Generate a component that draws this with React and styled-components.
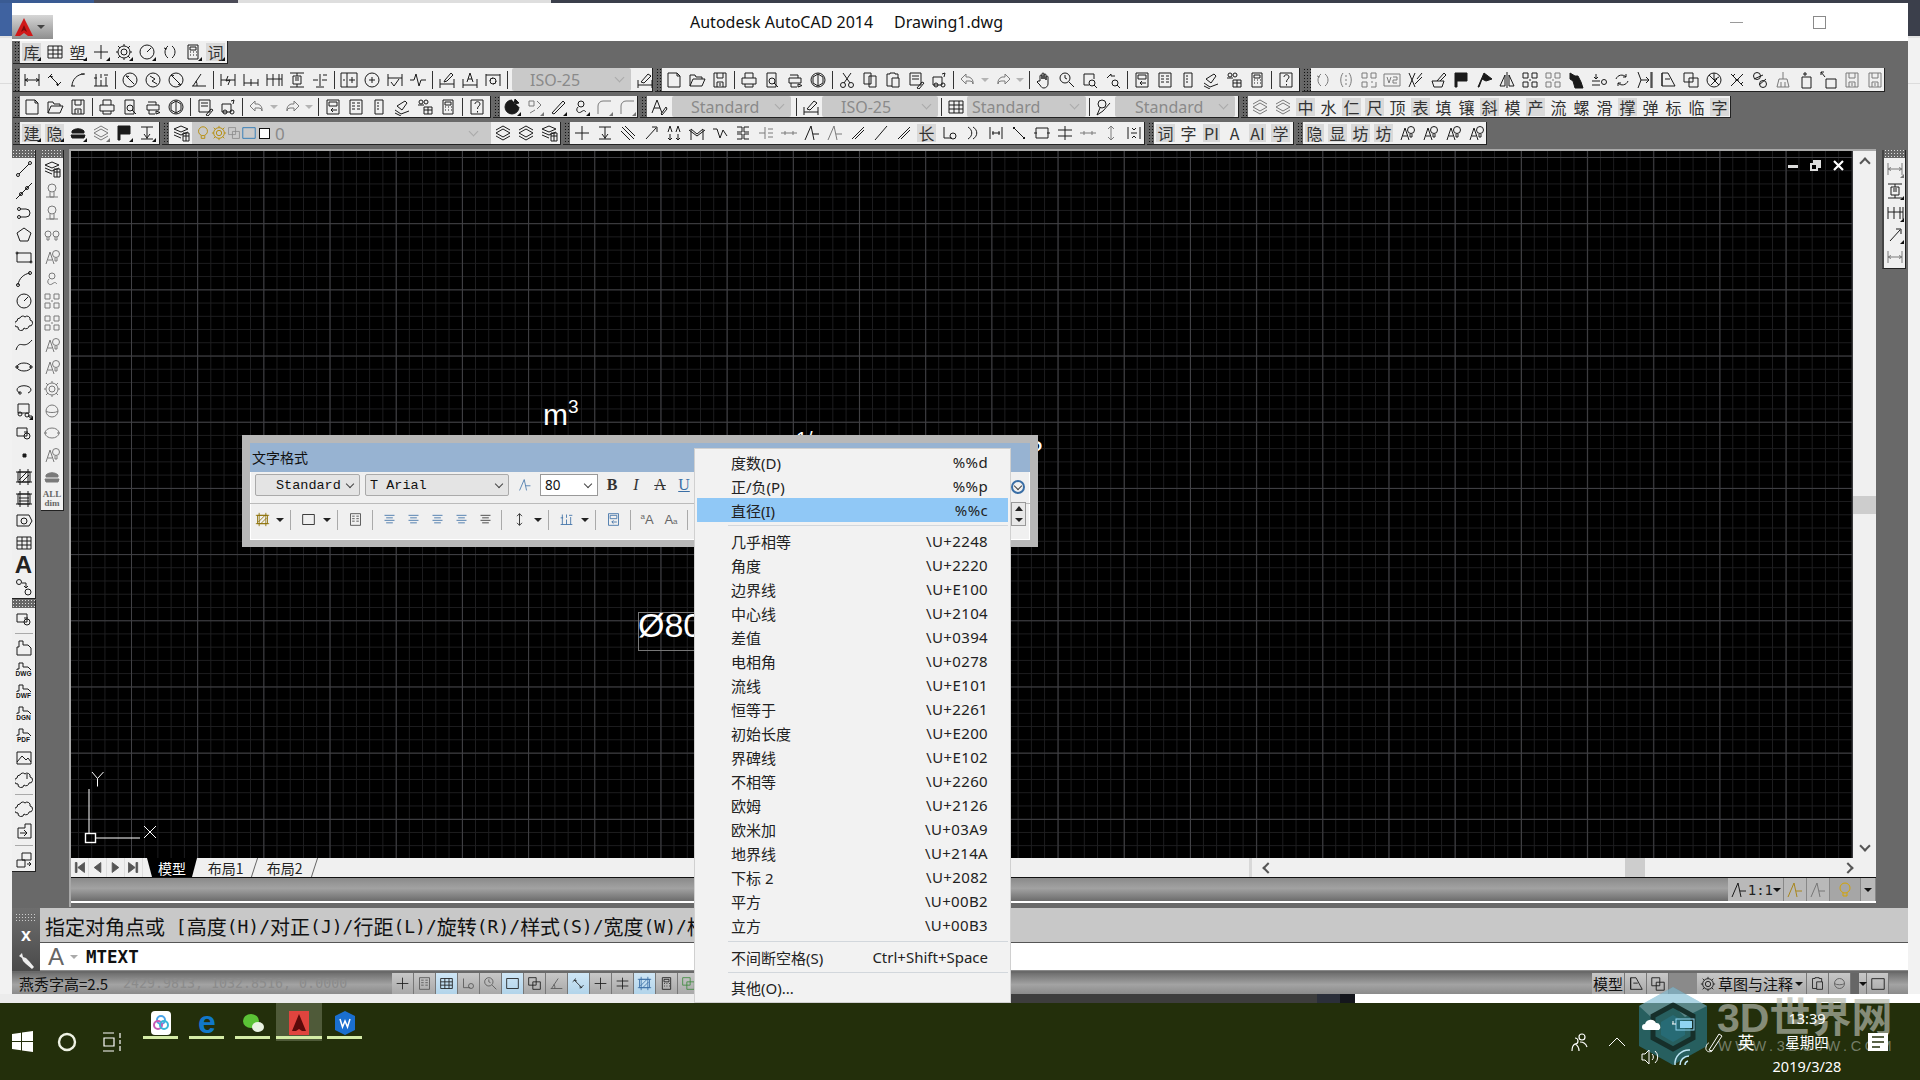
import React from 'react';
import styled, { createGlobalStyle } from 'styled-components';

const CJK = '"Noto Sans CJK SC", "Noto Sans", sans-serif';
const UI = '"Noto Sans", "Noto Sans CJK SC", sans-serif';
const MONO = '"DejaVu Sans Mono", "Noto Sans CJK SC", monospace';

const GlobalStyle = createGlobalStyle`
  html, body { margin: 0; padding: 0; background: #eee; }
  * { box-sizing: border-box; }
`;

// svg path helpers
const c = (x, y, r) => `M${x - r} ${y}a${r} ${r} 0 1 0 ${2 * r} 0a${r} ${r} 0 1 0 ${-2 * r} 0`;
const r = (x, y, w, h) => `M${x} ${y}h${w}v${h}h${-w}z`;

const ICONS = {
  dlin: 'M2 3v12M16 3v12M2 9h14M2 9l3-1.5M2 9l3 1.5M16 9l-3-1.5M16 9l-3 1.5',
  dali: 'M2 7l4-4M11 15l4-4M4 5l9 9M4 5l3 1M13 14l-3-1',
  darc: 'M3 15C3 9 8 3 15 3M2 15h4M12 3h4',
  dord: 'M4 3v12M9 3v4M9 9v6M14 6v9M2 15h14M2 7h3M12 4h4',
  drad: c(9, 9, 7) + 'M5 5l8 8M5 5l3 .5',
  djog: c(9, 9, 7) + 'M6 5l5 3-3 2 5 3',
  ddia: c(9, 9, 7) + 'M4 4l10 10M4 4l3 .5M14 14l-3-.5',
  dang: 'M2 15h14M3 15L11 3M7 15a8 8 0 0 0-1-5',
  dqck: 'M2 3v12M16 3v12M2 9h14M9 5l-2 5 4-1-2 5',
  dbase: 'M2 3v12M9 8v7M16 8v7M2 12h14',
  dcont: 'M2 3v12M8 3v12M14 3v12M17 3v12M2 8h15',
  dspace: 'M2 2h14M2 16h14M5 5h8v8H5zM7 7h4M7 9h4M9 2v3M9 13v3',
  dbrk: 'M9 3v12M2 9h5M11 9h5M5 16h8M12 4h4',
  dtol: r(1, 2, 16, 14) + 'M7 2v14M3 9h2M12 6v6M9 9h6',
  dcen: c(9, 9, 7) + 'M9 6v6M6 9h6',
  dinsp: 'M2 3v12M16 3v12M2 7h14M5 11l3 4 5-7',
  djogl: 'M1 9h4l2-6 3 12 2-6h5',
  dedit: 'M2 8v9M16 8v9M2 13h14M7 9l6-7 2 2-6 6-3 1z',
  dtedit: 'M2 8v9M16 8v9M2 14h14M6 11L9 2l3 9M7 8h4',
  dupd: 'M2 3v12M16 3v12M2 4h14M6 10a3 3 0 1 1 3 3M12 10a3 3 0 1 1-3-3',
  dstyle: 'M2 9v8M16 9v8M2 14h14M5 11l7-8 3 2-7 7z',
  new: 'M3 2h9l3 3v11H3zM12 2v3h3',
  open: 'M2 15V4h5l1 2h6v2M2 15l3-7h12l-3 7z',
  save: 'M3 2h12v14H3zM6 2v5h6V2M6 16v-5h6v5M9 12v3',
  print: 'M5 7V2h8v5M2 7h14v6H2zM5 13v3h8v-3',
  prev: 'M4 2h9v14H4z' + c(9, 10, 3) + 'M11 12l4 4',
  plot: 'M4 4h8v3M3 7h12v5H3zM5 12v4h6M12 13l4 1.5-4 1.5z',
  pub3d: c(9, 9, 7) + 'M4 6l5-3 5 3v6l-5 3-5-3zM9 3v12',
  cut: c(5, 14, 2.5) + c(13, 14, 2.5) + 'M6 12L13 2M12 12L5 2',
  copy: 'M3 2h7v11H3zM8 5h7v11H8z',
  paste: 'M3 3h3V2h5v1h3v4M3 3v12h5M8 7h7v9H8z',
  match: r(3, 2, 11, 12) + 'M5 5h7M5 8h7M10 17l5-6 2 1-5 6z',
  block: r(3, 6, 9, 8) + c(6, 14, 2) + c(13, 14, 2) + 'M12 3l3-1-1 4',
  undo: 'M7 3L2 8l5 5v-3h4a3 3 0 0 1 3 3 6 6 0 0 0-4-7H7z',
  redo: 'M11 3l5 5-5 5v-3H7a3 3 0 0 0-3 3 6 6 0 0 1 4-7h3z',
  pan: 'M5 10V5a1 1 0 0 1 2 0v3V3a1 1 0 0 1 2 0v5V4a1 1 0 0 1 2 0v5V6a1 1 0 0 1 2 0v7c0 2-2 4-4 4s-3-1-4-3l-3-3 1-1z',
  zoomrt: c(7, 7, 5) + 'M7 4v3l2 1M11 11l5 5',
  zoomw: 'M3 3h10v5M3 3v11h5' + c(11, 12, 3) + 'M13 14l3 3',
  zoomp: 'M3 7l4-4v2h4' + c(11, 12, 3) + 'M13 14l3 3',
  props: r(3, 2, 12, 14) + r(5, 4, 8, 4) + 'M13 12H7l2-2M7 12l2 2',
  dc: r(3, 2, 12, 14) + 'M5 5h3M10 5h3M5 8h3M10 8h3M5 11h3M10 11h3',
  palette: r(5, 2, 8, 14) + 'M7 5h2M7 8h2M7 11h2',
  sheet: 'M4 8l8-5 2 2-5 7zM2 12l6 4 8-3M2 15l6 3',
  mkup: c(5, 4, 2) + c(10, 4, 2) + r(8, 9, 8, 7) + 'M8 12h8M12 9v7M2 7h6',
  calc: r(4, 2, 10, 14) + r(6, 4, 6, 3) + 'M6 9h1M9 9h1M12 9h1M6 12h1M9 12h1M12 12h1',
  help: r(3, 2, 12, 14) + 'M7 6c0-3 5-3 5 0 0 2-2.5 2-2.5 5M9.5 13v1.5',
  curveA: 'M7 3C3 6 3 12 7 15M11 3c4 3 4 9 0 12M3 5l3 1',
  curveB: 'M6 2c-3 4-3 10 0 14M12 2c3 4 3 10 0 14M8 5h2M8 9h2M8 13h2',
  blk: r(2, 2, 5, 5) + r(11, 2, 5, 5) + r(2, 11, 5, 5) + 'M11 11h2M16 11v5h-5',
  v2: r(1, 3, 16, 12) + 'M4 6l2 6 2-6M10 6h4v3h-4v3h4',
  pens: 'M3 2l6 14M9 2L3 16M11 8l5-6M9 13l7-7',
  brush: 'M3 10h12l-2 6H5zM8 10l7-8 2 2-6 6',
  flag: 'M3 2h2v14H3zM5 2h10v8H5z',
  flagB: 'M3 16L9 2l8 6-6 2-4-2-3 8z',
  mirror: 'M9 1v16M7 4v11H2zM11 4v11h5z',
  grp: r(2, 2, 5, 5) + r(11, 2, 5, 5) + r(2, 11, 5, 5) + r(11, 11, 5, 5) + 'M8 9h2',
  cat: 'M3 2l5 3 3 0 3 6 2 6H8L6 10 3 8z',
  zero: 'M2 10h8M6 3v5M4 6l2 2 2-2M2 14h8' + c(14, 11, 2.5),
  swap: 'M3 8a6 6 0 0 1 10-2M15 10a6 6 0 0 1-10 2M13 3v3h-3M5 15v-3h3',
  arrowbar: 'M2 1l3 8-3 8M5 9h8M10 6l3 3-3 3M15 1v16M16 1v16',
  doc3d: 'M3 2h6l7 13H3zM3 2v13M6 8h5',
  doc2: r(2, 2, 9, 9) + r(7, 7, 9, 9),
  wheel: c(9, 9, 7) + 'M4 4l10 10M9 2v7l5-3M6 14l6-6',
  crossArr: 'M3 3l12 12M15 3L3 15M5 5l2-2M13 13l2-2M7 9h4',
  link: c(6, 5, 3.5) + c(12, 13, 3.5) + 'M3 8l9-4M8 14l7-6',
  broom: 'M9 1v7M5 8h8l2 8H3zM7 11v5M11 11v5',
  newf: 'M5 6h9v11H5zM8 1v4M6 3h4',
  boxarrow: r(6, 8, 10, 9) + 'M1 1l4 5M1 4V1h3',
  orbit: 'M9 2a7 7 0 1 0 7 7M12 1l4 4-5 1z',
  shape: 'M3 3h5v5H3zM11 3l4 4-4 4M4 15l5-3',
  pen: 'M3 15L14 3l2 2L5 16z',
  knot: c(9, 6, 3) + 'M6 9c-3 3 0 7 3 5s3-2 5 0',
  fillet: 'M3 16V8a5 5 0 0 1 5-5h8',
  table: r(2, 3, 14, 12) + 'M2 7h14M2 11h14M7 3v12M12 3v12',
  textA: 'M2 15L7 2l5 13M4 10h6M11 16l5-7 1 2-5 6z',
  mlead: c(7, 6, 4) + 'M5 10l-3 7 6-4 7-8',
  layers: 'M2 9l7-4 7 4-7 4zM2 12l7 4 7-4M2 6l7-4 7 4',
  layerp: 'M2 5l7-3 7 3-7 3zM2 8l7 3 7-3M2 11l7 3M11 9h6v8h-6zM11 12h6M14 9v8',
  cross: 'M9 2v14M2 9h14',
  dim: 'M3 3h12M3 15h12M9 3v12M6 10l3 4 3-4',
  diag: 'M3 3l12 12M6 2l10 10M2 7l9 9',
  leader: 'M4 15L14 4M10 3h5v5',
  aa: 'M3 8l2-6 2 6M11 8l2-6 2 6M5 10v6M13 10v6M3 14l2 2 2-2M11 14l2 2 2-2',
  mm: 'M3 16V5l6 5 6-5v11M1 6l8 6 8-6',
  zig: 'M2 5h4l3 9 3-8 4 6',
  brkt: 'M3 3h5v5H3M15 3h-5v5h5M3 15h5v-5H3M15 15h-5v-5h5',
  dash: 'M2 9h6M11 5h5M11 9h5M11 13h5M8 3v12',
  vv: 'M2 16L8 2l3 14M10 10h6',
  diagL: 'M3 15L15 3M6 15L15 6',
  slash: 'M3 16L15 2',
  circL: 'M3 3v11h8' + c(12, 12, 3),
  arcs: 'M4 3c5 3 5 9 0 12M9 3c5 3 5 9 0 12',
  ibar: 'M3 3v12M15 3v12M5 9h8M6 7v4M12 7v4',
  ln: 'M3 3l12 12M5 3l-2 2M15 13l-2 2',
  rectC: r(3, 4, 12, 10) + 'M1 9h3M14 9h3',
  tt: 'M2 6h14M2 12h14M9 2v14',
  lines: 'M3 4h12M5 7h8M3 10h12M5 13h8',
  minusA: 'M1 9h16M5 7v4M13 7v4',
  updown: 'M9 2v14M6 5l3-3 3 3M6 13l3 3 3-3',
  lbar: 'M3 3v12M15 3v12M6 9h6M7 4l2 2 2-2M7 14l2-2 2 2',
  gear: c(9, 9, 3) + c(9, 9, 6) + 'M9 1v2M9 15v2M1 9h2M15 9h2M3 3l2 2M13 13l2 2M3 15l2-2M13 5l2-2',
  bulb: c(9, 7, 5) + 'M7 12v3h4v-3',
  bulbA: 'M3 16L7 4l4 12M5 12h4' + c(13, 6, 3.5) + 'M12 10v3h2v-3',
  line: 'M4 14L14 4' + c(3, 15, 1.5) + c(15, 3, 1.5),
  xline: 'M1 17L17 1' + c(6, 12, 1.5) + c(12, 6, 1.5),
  pline: 'M5 5h6a4 4 0 0 1 0 8H5' + c(4, 5, 1.5) + c(4, 13, 1.5),
  polygon: 'M9 2l7 5-3 8H5L2 7z',
  rect: r(2, 5, 14, 9) + c(2, 5, 1) + c(16, 14, 1),
  arc: 'M3 15C4 8 9 4 15 3' + c(3, 15, 1.5) + c(15, 3, 1.5),
  circle: c(9, 9, 7) + 'M9 9l4-4',
  cloud: 'M5 4a3 3 0 0 1 5-1 3 3 0 0 1 5 3 3 3 0 0 1-1 6 3 3 0 0 1-5 2 3 3 0 0 1-6-1 3 3 0 0 1-1-6 3 3 0 0 1 3-3z',
  spline: 'M1 14C5 2 8 15 17 4',
  ellipse: 'M2 9a7 4 0 1 0 14 0a7 4 0 1 0-14 0' + c(2, 9, 1.2) + c(16, 9, 1.2),
  earc: 'M5 13a7 4 0 1 1 8 0' + c(5, 13, 1.2),
  insert: r(3, 2, 11, 9) + c(5, 12, 2) + c(12, 13, 2) + 'M13 14l4 3v-3z',
  makeb: r(2, 4, 10, 8) + c(12, 12, 3) + 'M9 8h4',
  point: r(8, 8, 3, 3),
  hatch: r(3, 4, 12, 10) + 'M1 4h16M1 14h16M5 1v16M13 1v16M4 12l8-8M7 14l7-7',
  grad: r(3, 4, 12, 10) + 'M1 4h16M1 14h16M5 1v16M13 1v16M4 8h10M4 11h10',
  region: 'M2 3h12l3 6-3 5H2z' + c(9, 9, 3),
  addsel: c(4, 4, 2.5) + c(13, 14, 3) + 'M7 5h4v5M9 8l2 2 2-2',
  att: 'M4 8V2h4v4h5l3 3v7H2V8z',
  img: r(2, 3, 14, 12) + 'M2 13l5-6 4 4 2-2 3 4',
  frame: r(2, 3, 14, 12),
  cloudclip: 'M5 4a3 3 0 0 1 5-1 3 3 0 0 1 5 3 3 3 0 0 1-1 6 3 3 0 0 1-5 2 3 3 0 0 1-6-1 3 3 0 0 1-1-6 3 3 0 0 1 3-3zM12 3v5',
  arrowd: 'M3 6h7V2h6v14H3zM5 11h7M9 8l3 3-3 3',
  ptbl: r(2, 9, 8, 7) + r(7, 2, 9, 7) + 'M12 13h4M14 11l2 2-2 2',
  lamp: c(9, 6, 4) + 'M7 10v5h4v-5M3 15h12',
  sphere: c(9, 9, 6) + 'M3 9c2 2 10 2 12 0',
  bulbs: c(5, 8, 3) + c(13, 8, 3) + 'M4 11v3h2v-3M12 11v3h2v-3',
  ring: 'M2 9a7 5 0 1 0 14 0a7 5 0 1 0-14 0M1 9h3M14 9h3',
  burger: 'M3 7c3-3 9-3 12 0v2H3zM2 11h14l-1 3H3z',
};

const FILLED = new Set(['flag', 'flagB', 'cat', 'point', 'burger', 'orbit']);

const Svg = styled.svg`
  width: ${(p) => p.$size || 18}px;
  height: ${(p) => p.$size || 18}px;
  flex: none;
  fill: ${(p) => (p.$filled ? p.$color : 'none')};
  stroke: ${(p) => p.$color};
  stroke-width: 1;
`;

const Icon = ({ name, size, color = '#1a1a1a' }) => (
  <Svg viewBox="0 0 18 18" $size={size} $color={color} $filled={FILLED.has(name)}>
    <path d={ICONS[name]} />
  </Svg>
);

const Screen = styled.div`
  position: relative;
  width: 1920px;
  height: 1080px;
  overflow: hidden;
  display: grid;
  grid-template-rows: 3px 991px 9px 77px;
  background: #eee;
`;

const TopStrip = styled.div`
  display: grid;
  grid-template-columns: 94px 144px 313px 1fr;
`;

const StripPart = styled.div`
  background: ${(p) => p.$color};
`;

const Desktop = styled.div`
  display: grid;
  grid-template-columns: 12px 1896px 12px;
`;

const SideEdge = styled.div`
  background: linear-gradient(${(p) => p.$top} 0 33px, #e2e2e2 33px 35px, #f2f2f2 35px 80px, #dcdcdc 80px 81px, #f2f2f2 81px);
`;

const AppWindow = styled.div`
  display: flex;
  flex-direction: column;
  background: #696969;
  min-width: 0;
`;

const TitleBar = styled.div`
  height: 38px;
  flex: none;
  background: #fff;
  position: relative;
  display: flex;
  align-items: center;
`;

const AppButton = styled.div`
  width: 41px;
  height: 24px;
  margin-top: 9px;
  background: linear-gradient(#d6d6d6, #8e8e8e);
  display: flex;
  align-items: center;
  gap: 3px;
  padding-left: 2px;
`;

const TinyCaret = styled.span`
  width: 0;
  height: 0;
  border-left: 4px solid transparent;
  border-right: 4px solid transparent;
  border-top: 4px solid ${(p) => p.$color || '#333'};
  flex: none;
`;

const TitleText = styled.div`
  margin-left: 637px;
  font: 16px ${UI};
  color: #111;
  white-space: pre;
`;

const WinButtons = styled.div`
  margin-left: auto;
  display: flex;
  align-items: center;
  width: 178px;
  justify-content: space-between;
  padding-right: 13px;
`;

const WinMin = styled.span`
  width: 13px;
  height: 1px;
  background: #9a9a9a;
`;

const WinMax = styled.span`
  width: 13px;
  height: 13px;
  border: 1px solid #8a8a8a;
`;

const ToolbarStack = styled.div`
  display: grid;
  grid-template-rows: 23px 24px 22px 23px;
  row-gap: 4px;
  padding: 0 0 4px 1px;
  flex: none;
`;

const ToolRow = styled.div`
  display: flex;
  gap: 2px;
`;

const Toolbar = styled.div`
  display: flex;
  align-items: center;
  width: ${(p) => p.$w}px;
  background: #f0f0f0;
  border-bottom: 1px solid #222;
  border-right: 1px solid #222;
  overflow: hidden;
  flex: none;
`;

const Grip = styled.div`
  width: ${(p) => p.$w || 7}px;
  align-self: stretch;
  flex: none;
  background: #666;
  background-image: radial-gradient(#111 0.8px, transparent 1px);
  background-size: 3px 3px;
  background-position: 1px 3px;
`;

const ToolBtn = styled.div`
  position: relative;
  width: 23px;
  height: 22px;
  flex: none;
  display: flex;
  align-items: center;
  justify-content: center;
  opacity: ${(p) => (p.$dim ? 0.55 : 1)};

  ${(p) => p.$fly && `
    &::after {
      content: '';
      position: absolute;
      right: 2px;
      bottom: 2px;
      border-left: 4px solid transparent;
      border-bottom: 4px solid #111;
    }
  `}
`;

const AttachLabel = styled.span`
  position: absolute;
  left: 3px;
  right: 3px;
  bottom: 3px;
  font: bold 6.5px/8px "Liberation Sans", sans-serif;
  color: #111;
  background: #f0f0f0;
  text-align: center;
`;

const Hanzi = styled.span`
  font: 16px/18px ${CJK};
  color: #333;
  background: ${(p) => (p.$shade ? '#d9d9d9' : 'transparent')};
  padding: 0 1px;
`;

const DropBtn = styled.div`
  width: 12px;
  flex: none;
  display: flex;
  justify-content: center;
  opacity: 0.5;
`;

const ToolSep = styled.div`
  width: 1px;
  height: 18px;
  margin: 0 2.5px;
  background: #333;
  flex: none;
`;

const Combo = styled.div`
  width: ${(p) => p.$w}px;
  height: 100%;
  margin: 0 ${(p) => p.$mx || 0}px;
  flex: none;
  background: #c9c9c9;
  color: #8a8a8a;
  font: 16px ${UI};
  display: flex;
  align-items: center;
  padding: 0 8px 0 ${(p) => p.$pad || 20}px;
  border-radius: 2px;
  justify-content: space-between;
`;

const ComboChevron = styled.span`
  width: 7px;
  height: 7px;
  border-right: 1px solid #aaa;
  border-bottom: 1px solid #aaa;
  transform: rotate(45deg);
  margin-top: -4px;
`;

const LayerCombo = styled.div`
  flex: 1;
  height: 100%;
  background: #c9c9c9;
  display: flex;
  align-items: center;
  padding: 0 14px 0 3px;
`;

const LayerZero = styled.span`
  font: 17px ${UI};
  color: #8a8a8a;
  margin-left: 5px;
  flex: 1;
`;

const LayerBox = styled.span`
  width: 11px;
  height: 11px;
  background: #fff;
  border: 1px solid #111;
  margin-left: 2px;
`;

const Tools = ({ items }) => items.split(' ').map((raw, i) => {
  if (raw === '|') return <ToolSep key={i} />;
  if (raw === 'v') return <DropBtn key={i}><TinyCaret $color="#777" /></DropBtn>;
  const fly = raw.endsWith('^');
  const dim = raw.startsWith('~');
  const name = raw.replace(/[\^~]/g, '');
  return (
    <ToolBtn key={i} $fly={fly} $dim={dim && !!ICONS[name]}>
      {ICONS[name] ? <Icon name={name} /> : <Hanzi $shade={dim}>{name}</Hanzi>}
    </ToolBtn>
  );
});

const AttachTool = ({ label }) => (
  <ToolBtn>
    <Icon name="att" />
    {label && <AttachLabel>{label}</AttachLabel>}
  </ToolBtn>
);

const MainRow = styled.div`
  height: 758px;
  flex: none;
  display: flex;
`;

const LeftDock = styled.div`
  width: 57px;
  flex: none;
  display: flex;
  gap: 5px;
  padding-top: 1px;
`;

const DockColumn = styled.div`
  display: flex;
  flex-direction: column;
  gap: 1px;
`;

const Palette = styled.div`
  width: ${(p) => p.$w || 24}px;
  background: #f0f0f0;
  border-right: 1px solid #222;
  border-bottom: 1px solid #222;
  border-left: ${(p) => (p.$boxed ? '2px solid #444' : 'none')};
  display: flex;
  flex-direction: column;
  align-items: center;
  flex: none;
`;

const PaletteGrip = styled.div`
  height: 8px;
  width: 100%;
  flex: none;
  background: #666;
  background-image: radial-gradient(#ddd 0.6px, transparent 0.8px);
  background-size: 3px 3px;
  background-position: 3px 2px;
`;

const PalSep = styled.div`
  height: 1px;
  width: 18px;
  margin: ${(p) => p.$m || 3}px 0;
  background: #aaa;
  flex: none;
`;

const PalText = styled.span`
  font: bold ${(p) => p.$size || 14}px/${(p) => (p.$serif ? 9 : 16)}px ${(p) => (p.$serif ? '"Liberation Serif", serif' : '"Liberation Sans", sans-serif')};
  color: ${(p) => (p.$serif ? '#666' : '#222')};
  text-align: center;
  white-space: pre;
`;

const CanvasColumn = styled.div`
  flex: 1;
  min-width: 0;
  display: flex;
  flex-direction: column;
  border-left: 2px solid #a8a8a8;
  border-top: 2px solid #a8a8a8;
`;

const CanvasRow = styled.div`
  height: 707px;
  flex: none;
  display: flex;
`;

const Canvas = styled.div`
  position: relative;
  flex: 1;
  min-width: 0;
  background-color: #000;
  background-image:
    linear-gradient(to right, #414145 1px, transparent 1px),
    linear-gradient(to bottom, #414145 1px, transparent 1px),
    linear-gradient(to right, #1e1e20 1px, transparent 1px),
    linear-gradient(to bottom, #1e1e20 1px, transparent 1px);
  background-size: 66.2px 66.2px, 66.2px 66.2px, 13.24px 13.24px, 13.24px 13.24px;
  background-position: 60px 0, 0 6px, 7px 0, 0 6px;
`;

const ViewControls = styled.div`
  position: absolute;
  top: 9px;
  right: 9px;
  display: flex;
  align-items: center;
  gap: 12px;
`;

const CanvasText = styled.div`
  position: absolute;
  left: ${(p) => p.$x}px;
  top: ${(p) => p.$y}px;
  color: #fff;
  font: ${(p) => p.$size || 30}px/1 "Liberation Sans", sans-serif;
  white-space: nowrap;
`;

const Sup = styled.sup`
  font-size: 19px;
  vertical-align: 12px;
  line-height: 0;
`;

const SelectBox = styled.div`
  position: absolute;
  left: 567px;
  top: 461px;
  width: 90px;
  height: 39px;
  border: 1px solid #777;
`;

const UcsIcon = styled.svg`
  position: absolute;
  left: 0;
  bottom: 8px;
  width: 100px;
  height: 100px;
`;

const VScroll = styled.div`
  width: 23px;
  flex: none;
  background: #f0f0f0;
  display: flex;
  flex-direction: column;
  align-items: center;
  justify-content: space-between;
  padding: 8px 0;
`;

const ScrollThumb = styled.div`
  width: 100%;
  height: 18px;
  background: #cdcdcd;
`;

const Chevron = styled.span`
  width: 8px;
  height: 8px;
  border-top: 2px solid #555;
  border-left: 2px solid #555;
  transform: rotate(${(p) => p.$deg}deg);
  flex: none;
`;

const TabBar = styled.div`
  height: 20px;
  flex: none;
  background: #f0f0f0;
  border-bottom: 1px solid #111;
  display: flex;
  align-items: stretch;
`;

const NavBtn = styled.div`
  width: 18px;
  display: flex;
  align-items: center;
  justify-content: center;
  border-right: 1px solid #ddd;
  flex: none;
`;

const Tab = styled.div`
  width: ${(p) => p.$w}px;
  margin-left: ${(p) => p.$ml || 0}px;
  display: flex;
  align-items: center;
  justify-content: center;
  font: 14px ${CJK};
  color: ${(p) => (p.$active ? '#fff' : '#222')};
  background: ${(p) => (p.$active ? '#000' : 'transparent')};
  border-right: ${(p) => (p.$active ? 'none' : '1px solid #666')};
  clip-path: ${(p) => (p.$active ? 'polygon(0 0, 100% 0, 90% 100%, 10% 100%)' : 'none')};
  transform: ${(p) => (p.$active ? 'none' : 'skewX(-18deg)')};
`;

const TabLabel = styled.span`
  transform: ${(p) => (p.$active ? 'none' : 'skewX(18deg)')};
`;

const HScroll = styled.div`
  margin-left: auto;
  width: 627px;
  border-left: 3px solid #d8d8d8;
  display: flex;
  align-items: center;
  position: relative;
  padding: 0 24px 0 12px;
  justify-content: space-between;
`;

const HThumb = styled.div`
  position: absolute;
  left: 373px;
  top: 0;
  bottom: 0;
  width: 20px;
  background: #cdcdcd;
`;

const AnnoBar = styled.div`
  height: 23px;
  flex: none;
  background: linear-gradient(#8a8a8a, #a2a2a2 45%, #6c6c6c);
  display: flex;
  justify-content: flex-end;
`;

const AnnoGroup = styled.div`
  display: flex;
  align-items: center;
  height: 100%;
  background: #b9b9b9;
  font: 14px ${MONO};
  color: #222;
`;

const AnnoCell = styled.div`
  height: 100%;
  display: flex;
  align-items: center;
  padding: 0 ${(p) => p.$px || 2}px;
  border-right: 1px solid #888;
  background: ${(p) => p.$bg || 'transparent'};
`;

const WhiteLine = styled.div`
  height: 2px;
  background: #fff;
  flex: none;
`;

const RightDock = styled.div`
  width: 32px;
  flex: none;
  padding: 1px 0 0 6px;
`;

const CommandArea = styled.div`
  height: 63px;
  margin-top: 1px;
  flex: none;
  display: flex;
`;

const CmdGrip = styled.div`
  width: 28px;
  flex: none;
  background: linear-gradient(#6e6e6e, #4a4a4a);
  display: flex;
  flex-direction: column;
  align-items: center;
  color: #fff;
`;

const GripDots = styled.div`
  width: 22px;
  height: 8px;
  margin-top: 5px;
  background-image: radial-gradient(#ccc 0.7px, transparent 1px);
  background-size: 3px 3px;
`;

const CmdX = styled.div`
  font: bold 18px/20px "Liberation Sans", sans-serif;
  margin-top: 4px;
`;

const WrenchSvg = styled.svg`
  margin-top: 6px;
`;

const CmdBody = styled.div`
  flex: 1;
  min-width: 0;
  display: flex;
  flex-direction: column;
`;

const CmdHistory = styled.div`
  height: 35px;
  flex: none;
  background: #c8c8c8;
  border-bottom: 1px solid #555;
  display: flex;
  align-items: center;
  padding: 3px 0 0 5px;
  font: 18px ${MONO};
  color: #111;
  white-space: pre;
  overflow: hidden;
`;

const CmdCjk = styled.span`
  font: 20px ${CJK};
`;

const CmdInput = styled.div`
  flex: 1;
  background: #fff;
  border-bottom: 1px solid #888;
  display: flex;
  align-items: center;
  padding: 1px 0 0 8px;
  gap: 6px;
`;

const CmdPrompt = styled.span`
  font: 24px/26px "Liberation Sans", sans-serif;
  color: #666;
`;

const CmdTyped = styled.span`
  font: bold 17.5px ${MONO};
  color: #111;
  margin-left: 2px;
`;

const StatusBar = styled.div`
  height: 21px;
  margin-top: 2px;
  flex: none;
  background: linear-gradient(#6f6f6f, #a3a3a3 55%, #8b8b8b);
  display: flex;
  align-items: center;
  padding-left: 7px;
`;

const StatusNote = styled.span`
  font: 15px ${CJK};
  color: #111;
  width: 104px;
  flex: none;
  white-space: nowrap;
`;

const StatusCoords = styled.span`
  font: 13.3px ${MONO};
  color: #8b8b8b;
  width: 269px;
  flex: none;
  white-space: nowrap;
`;

const StatusCell = styled.div`
  width: ${(p) => p.$w || 22}px;
  height: 100%;
  flex: none;
  display: flex;
  align-items: center;
  justify-content: center;
  gap: 2px;
  border-right: 1px solid #777;
  background: ${(p) => (p.$on ? 'linear-gradient(#cfe6f5, #b2d4ea)' : 'linear-gradient(#c8c8c8, #a8a8a8)')};
  font: 15px ${CJK};
  color: #111;
`;

const StatusGap = styled.div`
  width: ${(p) => p.$w}px;
  height: 100%;
  background: ${(p) => p.$bg || 'transparent'};
  flex: none;
`;

const StatusRight = styled.div`
  margin-left: auto;
  display: flex;
  height: 100%;
`;

const BelowStrip = styled.div`
  display: grid;
  grid-template-columns: 1011px 306px 23px 15px 1fr;
`;

const Taskbar = styled.div`
  background: #232f0b;
  display: flex;
  align-items: center;
  color: #fff;
`;

const TaskSlot = styled.div`
  width: ${(p) => p.$w}px;
  display: flex;
  justify-content: center;
  flex: none;
`;

const PinnedGroup = styled.div`
  margin-left: 4px;
  display: flex;
  align-self: flex-start;
`;

const Pinned = styled.div`
  position: relative;
  width: 46px;
  height: 38px;
  display: flex;
  justify-content: center;
  padding-top: 8px;
  background: ${(p) => (p.$active ? '#4f5a39' : 'transparent')};

  &::after {
    content: '';
    position: absolute;
    left: ${(p) => (p.$active ? 0 : 5)}px;
    right: ${(p) => (p.$active ? 0 : 6)}px;
    bottom: 2px;
    height: 3px;
    background: #d4eba6;
  }
`;

const PinSvg = styled.svg`
  width: 24px;
  height: 24px;
`;

const EdgeGlyph = styled.span`
  font: bold 32px/22px "Liberation Sans", sans-serif;
  color: #1178c9;
`;

/* the tray draws over the watermark, so the clock stays readable */
const Tray = styled.div`
  position: relative;
  z-index: 2;
  margin-left: auto;
  display: flex;
  align-items: center;
  padding-right: 16px;
  height: 100%;
`;

const TraySlot = styled.div`
  width: ${(p) => p.$w}px;
  display: flex;
  align-items: center;
  justify-content: center;
  flex: none;
  font: 17px ${CJK};
`;

const TrayGrid = styled.div`
  width: 62px;
  height: 100%;
  display: grid;
  grid-template-columns: 1fr 1fr;
  align-items: center;
  justify-items: center;
  padding: 6px 0;
  flex: none;
`;

const Clock = styled.div`
  width: 90px;
  flex: none;
  display: flex;
  flex-direction: column;
  align-items: center;
  gap: 2px;
  font: 14.5px/22px ${UI};
`;

const Notify = styled.div`
  width: 52px;
  flex: none;
  display: flex;
  justify-content: center;
`;

const TextFormat = styled.div`
  position: absolute;
  left: 242px;
  top: 435px;
  width: 796px;
  height: 112px;
  background: #f0f0f0;
  border: 8px solid #b8b8b8;
  border-bottom-width: 7px;
  box-shadow: inset 0 0 0 1px #fff;
  display: flex;
  flex-direction: column;
`;

const FormatTitle = styled.div`
  height: 29px;
  flex: none;
  background: #97b3d2;
  font: 14px/29px ${CJK};
  color: #111;
  padding-left: 2px;
`;

const FormatFontRow = styled.div`
  height: 32px;
  flex: none;
  display: flex;
  align-items: flex-start;
  padding: 2px 0 0 5px;
  border-bottom: 1px solid #bbb;
`;

const FormatParaRow = styled.div`
  height: 35px;
  flex: none;
  display: flex;
  align-items: center;
  padding-bottom: 4px;
`;

const FormatCombo = styled.div`
  width: ${(p) => p.$w}px;
  height: 22px;
  margin-right: ${(p) => p.$mr || 0}px;
  background: #e4e4e4;
  border: 1px solid #aaa;
  border-radius: 2px;
  flex: none;
  display: flex;
  align-items: center;
  justify-content: space-between;
  padding: 0 6px 0 ${(p) => p.$pl || 4}px;
  font: 13.5px "Liberation Mono", monospace;
  color: #111;
`;

const FormatInput = styled(FormatCombo)`
  background: #fff;
  border-color: #999;
  border-radius: 0;
  font-family: "Noto Sans", sans-serif;
`;

const SmallChevron = styled.span`
  width: 6px;
  height: 6px;
  border-right: 1px solid #444;
  border-bottom: 1px solid #444;
  transform: rotate(45deg);
  margin-top: -3px;
`;

const StyleBtn = styled.span`
  width: 24px;
  text-align: center;
  flex: none;
  font: ${(p) => p.$font} 16px/22px "Liberation Serif", serif;
  color: ${(p) => p.$color || '#333'};
  text-decoration: ${(p) => p.$deco || 'none'};
`;

const FmtIcon = styled.div`
  width: ${(p) => p.$w || 26}px;
  flex: none;
  display: flex;
  justify-content: center;
  align-items: center;
`;

const FmtIconTop = styled(FmtIcon)`
  height: 22px;
`;

const FmtDrop = styled(FmtIcon)`
  width: 12px;
`;

const FmtSep = styled.div`
  width: 1px;
  height: 20px;
  background: #aaa;
  flex: none;
  margin: 0 4px;
`;

const SizeLetter = styled.span`
  font: 13px "Liberation Sans", sans-serif;
  color: #666;
`;

const SizeSmall = styled.span`
  font-size: 8px;
  vertical-align: ${(p) => p.$v}px;
`;

const RoundChevron = styled.div`
  position: absolute;
  right: 5px;
  top: 37px;
  width: 14px;
  height: 14px;
  border: 2px solid #3a6ea5;
  border-radius: 50%;
  display: flex;
  align-items: center;
  justify-content: center;
`;

const Spinner = styled.div`
  position: absolute;
  right: 4px;
  top: 59px;
  width: 15px;
  height: 24px;
  border: 1px solid #999;
  background: #e8e8e8;
  display: flex;
  flex-direction: column;
  align-items: center;
  justify-content: space-around;
`;

const SpinUp = styled.span`
  border-left: 4px solid transparent;
  border-right: 4px solid transparent;
  border-bottom: 5px solid #222;
`;

const SymbolMenu = styled.div`
  position: absolute;
  left: 694px;
  top: 448px;
  width: 317px;
  height: 555px;
  background: #f2f2f2;
  border: 1px solid #d0d0d0;
  padding: 1px 2px 0;
  font: 15px ${UI};
  color: #222;
`;

const MenuItem = styled.div`
  height: 24px;
  display: flex;
  align-items: center;
  justify-content: space-between;
  padding: 0 20px 0 34px;
  background: ${(p) => (p.$active ? '#90c8f6' : 'transparent')};
  white-space: pre;
`;

const MenuCode = styled.span`
  letter-spacing: 0.35px;
`;

const MenuDivider = styled.div`
  height: ${(p) => p.$h}px;
  margin-left: 31px;
  display: flex;
  align-items: center;

  &::after {
    content: '';
    flex: 1;
    height: 1px;
    background: #d2d7dc;
  }
`;

const Watermark = styled.div`
  position: absolute;
  left: 1637px;
  top: 987px;
  width: 270px;
  height: 80px;
  pointer-events: none;
  opacity: 0.68;
`;

const WatermarkLogo = styled.svg`
  position: absolute;
  left: 0;
  top: 0;
  width: 72px;
  height: 78px;
`;

const WatermarkName = styled.div`
  position: absolute;
  left: 80px;
  top: 8px;
  font: bold 41px/46px "Liberation Sans", "Noto Sans CJK SC", sans-serif;
  color: #b4b8ac;
  white-space: nowrap;
`;

const WatermarkUrl = styled.div`
  position: absolute;
  left: 81px;
  top: 51px;
  font: 14.5px/16px "Liberation Sans", sans-serif;
  letter-spacing: 3.6px;
  color: #9ba294;
  white-space: nowrap;
`;

const MENU_TOP = [['度数(D)', '%%d'], ['正/负(P)', '%%p'], ['直径(I)', '%%c']];
const MENU_MID = [
  ['几乎相等', '\\U+2248'], ['角度', '\\U+2220'], ['边界线', '\\U+E100'], ['中心线', '\\U+2104'],
  ['差值', '\\U+0394'], ['电相角', '\\U+0278'], ['流线', '\\U+E101'], ['恒等于', '\\U+2261'],
  ['初始长度', '\\U+E200'], ['界碑线', '\\U+E102'], ['不相等', '\\U+2260'], ['欧姆', '\\U+2126'],
  ['欧米加', '\\U+03A9'], ['地界线', '\\U+214A'], ['下标 2', '\\U+2082'], ['平方', '\\U+00B2'], ['立方', '\\U+00B3'],
];

const CMD = '指定对角点或 [高度(H)/对正(J)/行距(L)/旋转(R)/样式(S)/宽度(W)/栏(C)]:';

const CommandText = () => CMD.split(/([\u4e00-\u9fff]+)/).map((part, i) => (
  i % 2 ? <CmdCjk key={i}>{part}</CmdCjk> : <span key={i}>{part}</span>
));

const AcadLogo = ({ size = 20 }) => (
  <svg width={size} height={size} viewBox="0 0 20 20">
    <path d="M10 1L1 19h5l4-3 4 3h5z" fill="#d01818" />
    <path d="M10 8l-3 7 3-2 3 2z" fill="#7a0b0b" />
  </svg>
);

const NavIcon = ({ d }) => (
  <Svg viewBox="0 0 18 18" $size={15} $color="#555" $filled>
    <path d={d} />
  </Svg>
);

export default function App() {
  return (
    <Screen>
      <GlobalStyle />
      <TopStrip>
        <StripPart $color="#3a5b93" />
        <StripPart $color="#4c4c58" />
        <StripPart $color="#dedede" />
        <StripPart $color="#3b3f4b" />
      </TopStrip>

      <Desktop>
        <SideEdge $top="#3f62a0" />
        <AppWindow>
          <TitleBar>
            <AppButton>
              <AcadLogo />
              <TinyCaret $color="#444" />
            </AppButton>
            <TitleText>{'Autodesk AutoCAD 2014     Drawing1.dwg'}</TitleText>
            <WinButtons>
              <WinMin />
              <WinMax />
              <span />
            </WinButtons>
          </TitleBar>

          <ToolbarStack>
            <ToolRow>
              <Toolbar $w={215}>
                <Grip />
                <Tools items="~库^ table 塑^ cross^ gear^ circle^ curveA calc^ ~词^" />
              </Toolbar>
            </ToolRow>
            <ToolRow>
              <Toolbar $w={640}>
                <Grip />
                <Tools items="dlin dali darc dord | drad djog ddia dang | dqck dbase dcont dspace dbrk | dtol dcen dinsp djogl | dedit dtedit dupd |" />
                <Combo $w={119} $mx={2} $pad={18}>ISO-25<ComboChevron /></Combo>
                <Tools items="dstyle" />
              </Toolbar>
              <Toolbar $w={645}>
                <Grip />
                <Tools items="new open save | print prev plot pub3d | cut copy paste match block | ~undo v ~redo v | pan zoomrt zoomw zoomp | props dc palette sheet mkup calc | help" />
              </Toolbar>
              <Toolbar $w={583}>
                <Grip $w={9} />
                <Tools items="~curveA ~curveB ~blk ~v2 pens brush flag flagB mirror grp ~grp cat zero swap arrowbar doc3d doc2 wheel crossArr link ~broom newf boxarrow ~save ~save" />
              </Toolbar>
            </ToolRow>
            <ToolRow>
              <Toolbar $w={478}>
                <Grip />
                <Tools items="new open save | print prev plot pub3d | match block | ~undo v ~redo v | props dc palette sheet mkup calc | help" />
              </Toolbar>
              <Toolbar $w={145}>
                <Grip />
                <Tools items="orbit^ ~shape^ pen^ knot^ ~fillet^ ~fillet^" />
              </Toolbar>
              <Toolbar $w={599}>
                <Grip />
                <Tools items="textA" />
                <Combo $w={119} $mx={2} $pad={19}>Standard<ComboChevron /></Combo>
                <Tools items="|" />
                <Tools items="dstyle" />
                <Combo $w={116} $pad={19}>ISO-25<ComboChevron /></Combo>
                <Tools items="|" />
                <Tools items="table" />
                <Combo $w={119} $pad={5}>Standard<ComboChevron /></Combo>
                <Tools items="|" />
                <Tools items="mlead" />
                <Combo $w={120} $pad={20}>Standard<ComboChevron /></Combo>
              </Toolbar>
              <Toolbar $w={490}>
                <Grip />
                <Tools items="~layers ~layers ~中 水 ~仁 ~尺 顶 ~表 填 镶 ~斜 模 ~产 流 螺 滑 ~撑 弹 标 临 ~字" />
              </Toolbar>
            </ToolRow>
            <ToolRow>
              <Toolbar $w={147}>
                <Grip />
                <Tools items="~建^ ~隐^ burger^ ~layers^ flag^ dim^" />
              </Toolbar>
              <Toolbar $w={399}>
                <Grip />
                <Tools items="layerp" />
                <LayerCombo>
                  <Icon name="bulb" size={16} color="#b58a00" />
                  <Icon name="gear" size={16} color="#b58a00" />
                  <Icon name="doc2" size={14} color="#888" />
                  <Icon name="frame" size={16} color="#2a78b5" />
                  <LayerBox />
                  <LayerZero>0</LayerZero>
                  <ComboChevron />
                </LayerCombo>
                <Tools items="layers layers layerp" />
              </Toolbar>
              <Toolbar $w={582}>
                <Grip />
                <Tools items="cross dim diag leader aa mm zig brkt ~dash ~minusA vv ~vv diagL slash diagL ~长 circL arcs ibar ln rectC tt ~minusA ~updown lbar" />
              </Toolbar>
              <Toolbar $w={147}>
                <Grip />
                <Tools items="~词 字 ~PI A ~AI ~学" />
              </Toolbar>
              <Toolbar $w={191}>
                <Grip />
                <Tools items="~隐 ~显 ~坊 ~坊 bulbA bulbA bulbA bulbA" />
              </Toolbar>
            </ToolRow>
          </ToolbarStack>

          <MainRow>
            <LeftDock>
              <DockColumn>
                <Palette>
                  <PaletteGrip />
                  <Tools items="line xline pline polygon rect arc circle cloud spline ellipse earc insert^ makeb point hatch grad region table" />
                  <ToolBtn><PalText $size={24}>A</PalText></ToolBtn>
                  <Tools items="addsel" />
                </Palette>
                <Palette>
                  <PaletteGrip />
                  <Tools items="makeb" />
                  <PalSep />
                  <AttachTool />
                  <AttachTool label="DWG" />
                  <AttachTool label="DWF" />
                  <AttachTool label="DGN" />
                  <AttachTool label="PDF" />
                  <Tools items="img cloudclip" />
                  <PalSep />
                  <Tools items="cloud arrowd" />
                  <PalSep />
                  <Tools items="ptbl" />
                </Palette>
              </DockColumn>
              <DockColumn>
                <Palette $w={23}>
                  <PaletteGrip />
                  <Tools items="layerp ~lamp ~lamp ~bulbs ~bulbA ~knot ~grp ~grp ~bulbA ~bulbA ~gear ~sphere ~ring ~bulbA ~burger" />
                  <ToolBtn><PalText $size={9} $serif>{'ALL\ndim'}</PalText></ToolBtn>
                </Palette>
              </DockColumn>
            </LeftDock>

            <CanvasColumn>
              <CanvasRow>
                <Canvas>
                  <CanvasText $x={472} $y={249}>m<Sup>3</Sup></CanvasText>
                  <CanvasText $x={725} $y={278} $size={20}>1/</CanvasText>
                  <CanvasText $x={957} $y={286} $size={26}>?</CanvasText>
                  <CanvasText $x={567} $y={457} $size={34}>Ø80</CanvasText>
                  <SelectBox />
                  <ViewControls>
                    <svg width="10" height="4"><rect width="10" height="3" y="1" fill="#ddd" /></svg>
                    <svg width="11" height="11" viewBox="0 0 11 11"><path d="M3 0h8v8H8v3H0V3h3z" fill="#ddd" /><rect x="2" y="5" width="4" height="4" fill="#000" /></svg>
                    <svg width="11" height="11" viewBox="0 0 11 11"><path d="M1 1l9 9M10 1l-9 9" stroke="#fff" strokeWidth="2.2" /></svg>
                  </ViewControls>
                  <UcsIcon viewBox="0 0 100 100">
                    <g fill="none" stroke="#fff" strokeWidth="1">
                      <path d="M18 39v44M24 88h45" />
                      <rect x="14.500" y="83.500" width="10" height="9" strokeWidth="1.4" />
                      <path d="M21 22l5.500 6.500 6-6.500M26.500 28.500v8M73 76l12 12M85 76L73 88" />
                    </g>
                  </UcsIcon>
                </Canvas>
                <VScroll>
                  <Chevron $deg={45} />
                  <ScrollThumb />
                  <Chevron $deg={225} />
                </VScroll>
              </CanvasRow>
              <TabBar>
                <NavBtn><NavIcon d="M4 3h2v12H4zM15 3v12L7 9z" /></NavBtn>
                <NavBtn><NavIcon d="M13 3v12L5 9z" /></NavBtn>
                <NavBtn><NavIcon d="M5 3v12l8-6z" /></NavBtn>
                <NavBtn><NavIcon d="M12 3h2v12h-2zM3 3v12l8-6z" /></NavBtn>
                <Tab $active $w={50} $ml={4}><TabLabel $active>模型</TabLabel></Tab>
                <Tab $w={58}><TabLabel>布局1</TabLabel></Tab>
                <Tab $w={60}><TabLabel>布局2</TabLabel></Tab>
                <HScroll>
                  <Chevron $deg={-45} />
                  <HThumb />
                  <Chevron $deg={135} />
                </HScroll>
              </TabBar>
              <AnnoBar>
                <AnnoGroup>
                  <AnnoCell><Icon name="vv" size={18} />1:1<TinyCaret $color="#111" /></AnnoCell>
                  <AnnoCell><Icon name="vv" size={18} color="#a8861c" /></AnnoCell>
                  <AnnoCell><Icon name="vv" size={18} color="#777" /></AnnoCell>
                  <AnnoCell $px={6} $bg="#a6a6a6"><Icon name="bulb" size={18} color="#d5a400" /></AnnoCell>
                  <AnnoCell $px={3}><TinyCaret $color="#111" /></AnnoCell>
                </AnnoGroup>
              </AnnoBar>
              <WhiteLine />
            </CanvasColumn>

            <RightDock>
              <Palette $w={24} $boxed>
                <PaletteGrip />
                <Tools items="~dlin^ dspace^ dcont^ leader^ ~dlin" />
              </Palette>
            </RightDock>
          </MainRow>

          <CommandArea>
            <CmdGrip>
              <GripDots />
              <CmdX>x</CmdX>
              <WrenchSvg width="20" height="20" viewBox="0 0 20 20">
                <path d="M3 5l3-3 1 4 3 1 3 3 5 6-2 2-6-5-3-3-1-3z" fill="#eee" />
              </WrenchSvg>
            </CmdGrip>
            <CmdBody>
              <CmdHistory><CommandText /></CmdHistory>
              <CmdInput>
                <CmdPrompt>A</CmdPrompt>
                <TinyCaret $color="#aaa" />
                <CmdTyped>MTEXT</CmdTyped>
              </CmdInput>
            </CmdBody>
          </CommandArea>

          <StatusBar>
            <StatusNote>燕秀字高=2.5</StatusNote>
            <StatusCoords>2429.9813, 1032.8516, 0.0000</StatusCoords>
            <StatusCell><Icon name="cross" size={15} /></StatusCell>
            <StatusCell><Icon name="dc" size={15} color="#555" /></StatusCell>
            <StatusCell $on><Icon name="table" size={15} /></StatusCell>
            <StatusCell><Icon name="circL" size={15} color="#555" /></StatusCell>
            <StatusCell><Icon name="zoomrt" size={15} color="#555" /></StatusCell>
            <StatusCell $on><Icon name="frame" size={15} /></StatusCell>
            <StatusCell><Icon name="doc2" size={15} /></StatusCell>
            <StatusCell><Icon name="dang" size={15} color="#555" /></StatusCell>
            <StatusCell $on><Icon name="dali" size={15} /></StatusCell>
            <StatusCell><Icon name="cross" size={15} /></StatusCell>
            <StatusCell><Icon name="tt" size={15} /></StatusCell>
            <StatusCell $on><Icon name="hatch" size={15} color="#3a6ea5" /></StatusCell>
            <StatusCell><Icon name="calc" size={15} /></StatusCell>
            <StatusCell><Icon name="doc2" size={15} color="#3f8a3f" /></StatusCell>
            <StatusRight>
              <StatusCell $w={33}>模型</StatusCell>
              <StatusCell><Icon name="doc3d" size={16} /></StatusCell>
              <StatusCell><Icon name="doc2" size={16} /></StatusCell>
              <StatusGap $w={28} $bg="#8a8a8a" />
              <StatusCell $w={110}><Icon name="gear" size={16} />草图与注释<TinyCaret $color="#111" /></StatusCell>
              <StatusCell><Icon name="paste" size={15} /></StatusCell>
              <StatusCell><Icon name="sphere" size={15} color="#555" /></StatusCell>
              <StatusGap $w={8} $bg="#666" />
              <StatusCell $w={8}><TinyCaret $color="#111" /></StatusCell>
              <StatusCell><Icon name="frame" size={16} /></StatusCell>
              <StatusGap $w={19} />
            </StatusRight>
          </StatusBar>
        </AppWindow>
        <SideEdge $top="#3b3f4b" />
      </Desktop>

      <BelowStrip>
        <StripPart $color="#ececec" />
        <StripPart $color="#3d3d3d" />
        <StripPart $color="#2b2f3a" />
        <StripPart $color="#14161c" />
        <StripPart $color="#fff" />
      </BelowStrip>

      <Taskbar>
        <TaskSlot $w={44}>
          <svg width="21" height="21" viewBox="0 0 21 21"><path d="M0 3l9-1.300v8.300H0zM10 1.500L21 0v10H10zM0 11h9v8.300L0 18zM10 11h11v10l-11-1.500z" fill="#fff" /></svg>
        </TaskSlot>
        <TaskSlot $w={46}>
          <svg width="20" height="20" viewBox="0 0 20 20"><circle cx="10" cy="10" r="8" fill="none" stroke="#eef2e4" strokeWidth="2.400" /></svg>
        </TaskSlot>
        <TaskSlot $w={44}>
          <svg width="20" height="20" viewBox="0 0 20 20"><path d="M1 1h11M1 19h11M2 6h10v8H2zM18 1v5M18 8v4M18 14v5" fill="none" stroke="#fff" strokeWidth="1.200" /></svg>
        </TaskSlot>
        <PinnedGroup>
          <Pinned>
            <PinSvg viewBox="0 0 24 24">
              <rect x="2" width="20" height="24" rx="4" fill="#fff" />
              <circle cx="12" cy="9" r="4" fill="none" stroke="#4aa3e8" strokeWidth="2" />
              <circle cx="9" cy="14" r="4" fill="none" stroke="#c65ab5" strokeWidth="2" />
              <circle cx="15" cy="14" r="4" fill="none" stroke="#38b6d8" strokeWidth="2" />
            </PinSvg>
          </Pinned>
          <Pinned><EdgeGlyph>e</EdgeGlyph></Pinned>
          <Pinned>
            <PinSvg viewBox="0 0 24 24">
              <ellipse cx="10" cy="10" rx="8" ry="7" fill="#5bc236" />
              <ellipse cx="17" cy="16" rx="6" ry="5" fill="#e9f2e2" />
            </PinSvg>
          </Pinned>
          <Pinned $active>
            <PinSvg viewBox="0 0 24 24">
              <rect x="2" width="20" height="26" fill="#e0443e" />
              <path d="M12 3L5 20h4l3-2 3 2h4z" fill="#5a0a0a" />
            </PinSvg>
          </Pinned>
          <Pinned>
            <PinSvg viewBox="0 0 24 24">
              <path d="M12 0l10 5v14l-10 5-10-5V5z" fill="#1a6fd0" />
              <path d="M7 8l2.500 8 2.500-6 2.500 6 2.500-8" fill="none" stroke="#fff" strokeWidth="1.500" />
            </PinSvg>
          </Pinned>
        </PinnedGroup>
        <Tray>
          <TraySlot $w={36}>
            <svg width="20" height="20" viewBox="0 0 20 20"><path d="M2 19c0-4 1-6 3-7 2 1 4 3 4 7M5 12a3 3 0 1 0 0-6M12 8a3 3 0 1 0 0-6 3 3 0 0 0 0 6zM10 10c3 0 6 2 7 5" fill="none" stroke="#fff" strokeWidth="1.200" /></svg>
          </TraySlot>
          <TraySlot $w={38}>
            <svg width="18" height="10" viewBox="0 0 18 10"><path d="M1 9l8-8 8 8" fill="none" stroke="#fff" /></svg>
          </TraySlot>
          <TrayGrid>
            <svg width="22" height="14" viewBox="0 0 22 14"><path d="M4 13a3 3 0 0 1 0-6 6 6 0 0 1 11-1 4 4 0 0 1 3 7z" fill="#fff" /></svg>
            <svg width="24" height="14" viewBox="0 0 24 14"><rect x="5" y="2" width="18" height="11" fill="none" stroke="#8fd4f0" /><rect x="9" y="4" width="12" height="7" fill="#8fd4f0" /><path d="M1 7h4M2 4v3" stroke="#fff" /></svg>
            <svg width="22" height="18" viewBox="0 0 22 18"><path d="M1 6h3l4-4v14l-4-4H1zM11 6a4 4 0 0 1 0 6M14 3a8 8 0 0 1 0 12" fill="none" stroke="#fff" /></svg>
            <svg width="20" height="18" viewBox="0 0 20 18"><path d="M2 17A14 14 0 0 1 17 2M7 17a9 9 0 0 1 9-9M12 17a4 4 0 0 1 3-4" fill="none" stroke="#bfe6f5" strokeWidth="1.500" /></svg>
          </TrayGrid>
          <TraySlot $w={32}>
            <svg width="20" height="22" viewBox="0 0 20 22"><path d="M5 19L15 3l3 2L8 20zM8 20c-3 2-7 0-6-4s3-4 3-4" fill="none" stroke="#fff" /></svg>
          </TraySlot>
          <TraySlot $w={32}>英</TraySlot>
          <Clock>
            <span>13:39</span>
            <span>星期四</span>
            <span>2019/3/28</span>
          </Clock>
          <Notify>
            <svg width="20" height="18" viewBox="0 0 20 18"><rect width="20" height="18" fill="#fff" /><path d="M4 4h12M4 9h12M4 14h8" stroke="#232f0b" strokeWidth="1.500" /></svg>
          </Notify>
        </Tray>
      </Taskbar>

      <TextFormat>
        <FormatTitle>文字格式</FormatTitle>
        <FormatFontRow>
          <FormatCombo $w={105} $mr={5} $pl={20}>Standard<SmallChevron /></FormatCombo>
          <FormatCombo $w={144} $mr={1}><span>T Arial</span><SmallChevron /></FormatCombo>
          <FmtIconTop $w={30}><Icon name="vv" size={14} color="#3a6ea5" /></FmtIconTop>
          <FormatInput $w={58} $mr={2}>80<SmallChevron /></FormatInput>
          <StyleBtn $font="bold">B</StyleBtn>
          <StyleBtn $font="italic">I</StyleBtn>
          <StyleBtn $font="normal" $deco="line-through">A</StyleBtn>
          <StyleBtn $font="normal" $deco="underline" $color="#3a6ea5">U</StyleBtn>
        </FormatFontRow>
        <FormatParaRow>
          <FmtIcon $w={24}><Icon name="hatch" size={15} color="#8a6d00" /></FmtIcon>
          <FmtDrop><TinyCaret $color="#222" /></FmtDrop>
          <FmtSep />
          <FmtIcon><Icon name="frame" size={15} /></FmtIcon>
          <FmtDrop><TinyCaret $color="#222" /></FmtDrop>
          <FmtSep />
          <FmtIcon><Icon name="dc" size={15} color="#444" /></FmtIcon>
          <FmtSep />
          <FmtIcon $w={24}><Icon name="lines" size={15} color="#3a6ea5" /></FmtIcon>
          <FmtIcon $w={24}><Icon name="lines" size={15} color="#3a6ea5" /></FmtIcon>
          <FmtIcon $w={24}><Icon name="lines" size={15} color="#3a6ea5" /></FmtIcon>
          <FmtIcon $w={24}><Icon name="lines" size={15} color="#3a6ea5" /></FmtIcon>
          <FmtIcon $w={24}><Icon name="lines" size={15} color="#333" /></FmtIcon>
          <FmtSep />
          <FmtIcon><Icon name="updown" size={15} /></FmtIcon>
          <FmtDrop><TinyCaret $color="#222" /></FmtDrop>
          <FmtSep />
          <FmtIcon><Icon name="dord" size={15} color="#3a6ea5" /></FmtIcon>
          <FmtDrop><TinyCaret $color="#222" /></FmtDrop>
          <FmtSep />
          <FmtIcon><Icon name="props" size={15} color="#3a6ea5" /></FmtIcon>
          <FmtSep />
          <FmtIcon $w={24}><SizeLetter><SizeSmall $v={5}>a</SizeSmall>A</SizeLetter></FmtIcon>
          <FmtIcon $w={24}><SizeLetter>A<SizeSmall $v={0}>a</SizeSmall></SizeLetter></FmtIcon>
          <FmtSep />
        </FormatParaRow>
        <RoundChevron><SmallChevron /></RoundChevron>
        <Spinner><SpinUp /><TinyCaret $color="#222" /></Spinner>
      </TextFormat>

      <SymbolMenu>
        {MENU_TOP.map(([label, code], i) => (
          <MenuItem key={label} $active={i === 2}><span>{label}</span><MenuCode>{code}</MenuCode></MenuItem>
        ))}
        <MenuDivider $h={7} />
        {MENU_MID.map(([label, code]) => (
          <MenuItem key={label}><span>{label}</span><MenuCode>{code}</MenuCode></MenuItem>
        ))}
        <MenuDivider $h={8} />
        <MenuItem><span>不间断空格(S)</span><span>Ctrl+Shift+Space</span></MenuItem>
        <MenuDivider $h={6} />
        <MenuItem><span>其他(O)...</span></MenuItem>
      </SymbolMenu>

      <Watermark>
        <WatermarkLogo viewBox="0 0 72 78">
          <path d="M36 0l34 19v40L36 78 2 59V19z" fill="#2a88a8" opacity="0.8" />
          <path d="M36 0l34 19L48 30 36 18 14 30 2 19z" fill="#a9d6ea" opacity="0.6" />
          <path d="M36 18l20 11v22L36 62 16 51V29z" fill="none" stroke="#10303a" strokeWidth="5" />
          <path d="M36 28l12 7v13l-12 7-12-7V35z" fill="#2a88a8" />
        </WatermarkLogo>
        <WatermarkName>3D世界网</WatermarkName>
        <WatermarkUrl>WWW.3DSJW.COM</WatermarkUrl>
      </Watermark>
    </Screen>
  );
}
